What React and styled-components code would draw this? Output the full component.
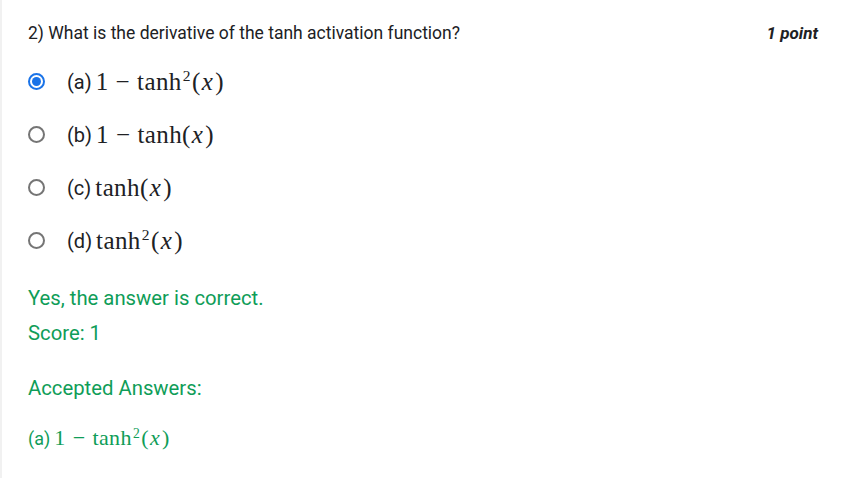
import React from "react"
import styled, { createGlobalStyle } from "styled-components"

const Global = createGlobalStyle`
  html, body { margin: 0; padding: 0; background: #fff; }
  body { font-family: Roboto, "Liberation Sans", sans-serif; color: #202124; }
`

function Tanh2() {
  return (
    <>
      <M>tanh</M><Sup>2</Sup><M>(</M><Var>x</Var><M>)</M>
    </>
  )
}

function Tanh() {
  return (
    <>
      <M>tanh(</M><Var>x</Var><M>)</M>
    </>
  )
}

const options = [
  { label: "(a)", kind: "oneMinusSq", checked: true },
  { label: "(b)", kind: "oneMinus" },
  { label: "(c)", kind: "tanh" },
  { label: "(d)", kind: "sq" },
]

function Formula({ kind }) {
  if (kind === "oneMinusSq") return <><M>1</M><Op>−</Op><Tanh2 /></>
  if (kind === "oneMinus") return <><M>1</M><Op>−</Op><Tanh /></>
  if (kind === "tanh") return <Tanh />
  return <Tanh2 />
}

function App() {
  return (
    <Page>
      <Global />
      <Header>
        <Question>2) What is the derivative of the tanh activation function?</Question>
        <Points>1 point</Points>
      </Header>
      <OptionList>
        {options.map((o, i) => (
          <Option key={i}>
            <Radio checked={o.checked} />
            <OptLabel>{o.label}</OptLabel>
            <MathText><Formula kind={o.kind} /></MathText>
          </Option>
        ))}
      </OptionList>
      <Result>
        <Feedback>Yes, the answer is correct.</Feedback>
        <Feedback>Score: 1</Feedback>
        <Feedback gap>Accepted Answers:</Feedback>
        <AnswerRow>
          <AnsLabel>(a)</AnsLabel>
          <MathText small>
            <Formula kind="oneMinusSq" />
          </MathText>
        </AnswerRow>
      </Result>
    </Page>
  )
}

export default App

const Page = styled.div`
  min-height: 478px;
  box-sizing: border-box;
  border-left: 2px solid #f1f1f1;
  padding: 21px 24px 0 26px;
`

const Header = styled.div`
  display: flex;
  justify-content: space-between;
  align-items: center;
  height: 24px;
`

const Question = styled.div`
  font-size: 17.5px;
  color: #202124;
`

const Points = styled.div`
  font-size: 17px;
  font-weight: 700;
  font-style: italic;
  color: #202124;
`

const OptionList = styled.div`
  display: flex;
  flex-direction: column;
  margin-top: 10px;
`

const Option = styled.div`
  display: flex;
  align-items: center;
  height: 53px;
`

const Radio = styled.span`
  box-sizing: border-box;
  width: 17px;
  height: 17px;
  border-radius: 50%;
  border: 2px solid ${p => (p.checked ? "#1a73e8" : "#757575")};
  display: flex;
  align-items: center;
  justify-content: center;
  &::after {
    content: "";
    display: ${p => (p.checked ? "block" : "none")};
    width: 9px;
    height: 9px;
    border-radius: 50%;
    background: #1a73e8;
  }
`

const OptLabel = styled.span`
  font-size: 20px;
  margin-left: 22px;
  margin-right: 4px;
  color: #202124;
`

const MathText = styled.span`
  font-family: "Liberation Serif", "DejaVu Serif", serif;
  font-size: ${p => (p.small ? "22px" : "25px")};
  letter-spacing: 0.4px;
  white-space: pre;
  line-height: 1;
`

const M = styled.span``

const Var = styled.span`
  font-style: italic;
  padding: 0 2px 0 1px;
`

const Op = styled.span`
  padding: 0 7px;
`

const Sup = styled.sup`
  font-size: 0.62em;
  vertical-align: 0;
  position: relative;
  top: -0.55em;
  line-height: 0;
  margin: 0 1px;
`

const Result = styled.div`
  display: flex;
  flex-direction: column;
  margin-top: 14px;
`

const Feedback = styled.div`
  color: #0f9d58;
  font-size: 20.3px;
  line-height: 35px;
  margin-top: ${p => (p.gap ? "20px" : "0")};
`

const AnswerRow = styled.div`
  display: flex;
  align-items: baseline;
  color: #0f9d58;
  margin-top: 21px;
`

const AnsLabel = styled.span`
  font-size: 18px;
  margin-right: 4px;
`
